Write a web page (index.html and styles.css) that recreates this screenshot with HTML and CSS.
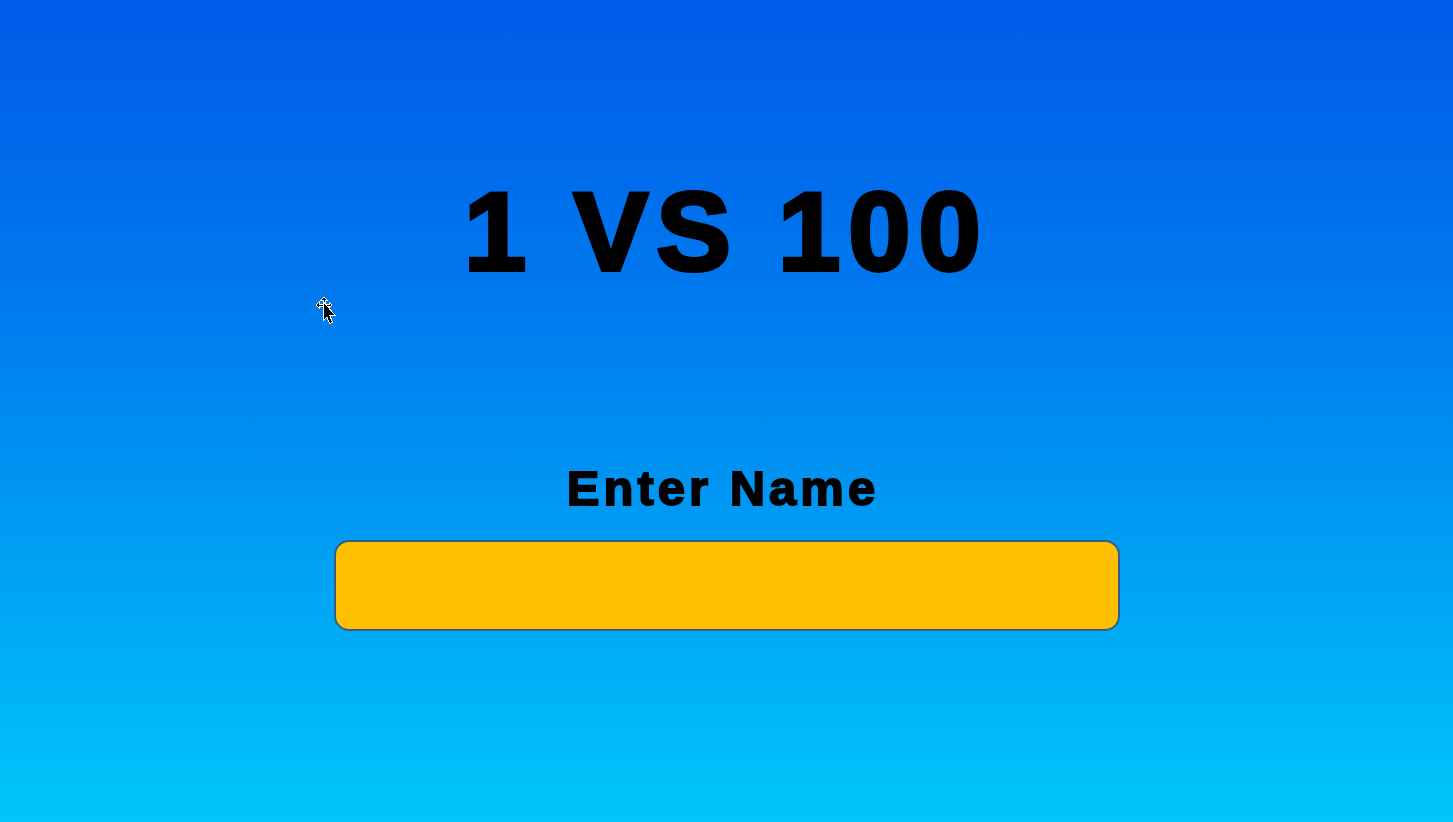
FILE: index.html
```html
<!DOCTYPE html>
<html lang="en">
<head>
<meta charset="utf-8">
<title>1 VS 100</title>
<link rel="stylesheet" href="styles.css">
</head>
<body>
<main class="screen">
  <h1 class="title">1 VS 100</h1>
  <label class="label" for="name">Enter Name</label>
  <input class="name-input" id="name" type="text">
  <svg class="cursor" width="22" height="30" viewBox="0 0 22 30" aria-hidden="true">
    <g shape-rendering="crispEdges">
      <path d="M8 0 L11 3 L9 3 L9 7 L13 7 L13 5 L16 8 L13 11 L13 9 L9 9 L9 10 L7 10 L7 9 L3 9 L3 11 L0 8 L3 5 L3 7 L7 7 L7 3 L5 3 Z" fill="#000" stroke="#fff" stroke-width="1"/>
      <path d="M8 6 L8 22 L11 19 L14 26 L16 25 L13 18 L18 18 Z" fill="#fff" stroke="#fff" stroke-width="2" stroke-linejoin="miter"/>
      <path d="M8 6 L8 22 L11 19 L14 26 L16 25 L13 18 L18 18 Z" fill="#000"/>
    </g>
  </svg>
</main>
</body>
</html>
```

FILE: styles.css
```css
html, body {
  margin: 0;
  padding: 0;
  height: 100%;
}

body {
  background: linear-gradient(180deg, #005ae8 0%, #0078ee 35%, #009cf3 65%, #00c6fa 100%);
  font-family: "Liberation Sans", Arial, sans-serif;
  color: #000;
  overflow: hidden;
}

.screen {
  position: relative;
  height: 822px;
  display: flex;
  flex-direction: column;
  align-items: center;
}

.title {
  margin: 176px 0 0 0;
  font-size: 112px;
  line-height: 1;
  font-weight: 700;
  letter-spacing: 8px;
  -webkit-text-stroke: 4px #000;
}

.label {
  display: block;
  margin-top: 176px;
  padding-right: 7px;
  font-size: 49px;
  line-height: 1;
  font-weight: 700;
  letter-spacing: 4px;
  -webkit-text-stroke: 1.8px #000;
}

.name-input {
  box-sizing: border-box;
  margin-top: 27px;
  width: 786px;
  height: 91px;
  background: #ffc000;
  border: 2px solid #3b5a8c;
  border-radius: 15px;
  outline: none;
  font-family: "Liberation Sans", Arial, sans-serif;
  font-size: 32px;
  padding: 0 20px;
}

.cursor {
  position: absolute;
  left: 316px;
  top: 297px;
}
```
